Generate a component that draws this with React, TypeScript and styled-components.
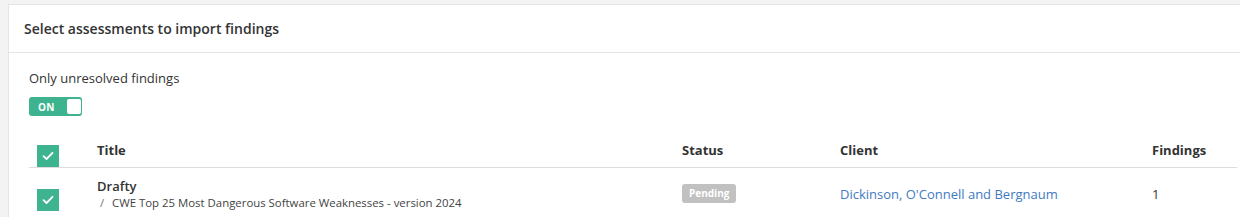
import React, { useState } from 'react'
import styled, { createGlobalStyle } from 'styled-components'

const GlobalStyle = createGlobalStyle`
  html, body {
    margin: 0;
    padding: 0;
    background: #f3f3f3;
    font-family: "Open Sans", "Noto Sans", Arial, sans-serif;
    color: #333;
  }
`

type Assessment = {
    id: number
    title: string
    template: string
    status: string
    client: string
    findings: number
}

const assessments: Assessment[] = [
    {
        id: 1,
        title: 'Drafty',
        template: 'CWE Top 25 Most Dangerous Software Weaknesses - version 2024',
        status: 'Pending',
        client: "Dickinson, O'Connell and Bergnaum",
        findings: 1,
    },
]

const CheckIcon = () => (
    <svg width="12" height="10" viewBox="0 0 12 10">
        <path d="M1.5 5.2 L4.5 8 L10.5 1.8" fill="none" stroke="#fff" strokeWidth="1.8" strokeLinecap="round" strokeLinejoin="round" />
    </svg>
)

const App = () => {
    const [onlyUnresolved, setOnlyUnresolved] = useState(true)
    const [selected, setSelected] = useState<number[]>([1])
    const allSelected = selected.length === assessments.length

    const toggleRow = (id: number) => {
        setSelected(selected.includes(id) ? selected.filter(s => s !== id) : [...selected, id])
    }

    return (
        <>
            <GlobalStyle />
            <Card>
                <CardHeader>
                    <H3>Select assessments to import findings</H3>
                </CardHeader>
                <CardBody>
                    <Label>Only unresolved findings</Label>
                    <Toggle $on={onlyUnresolved} onClick={() => setOnlyUnresolved(!onlyUnresolved)}>
                        <ToggleText>{onlyUnresolved ? 'ON' : 'OFF'}</ToggleText>
                        <Knob $on={onlyUnresolved} />
                    </Toggle>
                    <Table>
                        <HeadRow>
                            <CheckCell $head>
                                <Checkbox $checked={allSelected} onClick={() => setSelected(allSelected ? [] : assessments.map(a => a.id))}>
                                    {allSelected && <CheckIcon />}
                                </Checkbox>
                            </CheckCell>
                            <Th>Title</Th>
                            <Th>Status</Th>
                            <Th>Client</Th>
                            <Th>Findings</Th>
                        </HeadRow>
                        {assessments.map(item => (
                            <Row key={item.id}>
                                <CheckCell>
                                    <Checkbox $checked={selected.includes(item.id)} onClick={() => toggleRow(item.id)}>
                                        {selected.includes(item.id) && <CheckIcon />}
                                    </Checkbox>
                                </CheckCell>
                                <TitleCell>
                                    <Name>{item.title}</Name>
                                    <Sub><Slash>/</Slash>{item.template}</Sub>
                                </TitleCell>
                                <Td>
                                    <Badge>{item.status}</Badge>
                                </Td>
                                <Td>
                                    <ClientLink href="#">{item.client}</ClientLink>
                                </Td>
                                <Td>
                                    <Count>{item.findings}</Count>
                                </Td>
                            </Row>
                        ))}
                    </Table>
                </CardBody>
            </Card>
        </>
    )
}

const Card = styled.div`
  margin: 4px 0 0 8px;
  background: #fff;
  border-top: 1px solid #e3e5e8;
  border-left: 1px solid #e3e5e8;
  height: 213px;
  overflow: hidden;
`
const CardHeader = styled.div`
  height: 47px;
  display: flex;
  align-items: center;
  padding-left: 15px;
  border-bottom: 1px solid #e3e5e8;
`
const H3 = styled.h3`
  margin: 0;
  font-size: 14px;
  font-weight: 600;
  color: #333;
`
const CardBody = styled.div`
  padding: 16px 3px 0 20px;
`
const Label = styled.div`
  font-size: 13px;
  line-height: 18px;
  color: #333;
`
const Toggle = styled.div<{ $on: boolean }>`
  margin-top: 10px;
  width: 53px;
  height: 19px;
  box-sizing: border-box;
  border-radius: 3px;
  background: ${p => (p.$on ? '#3db38f' : '#ccc')};
  display: flex;
  align-items: center;
  position: relative;
  cursor: pointer;
`
const ToggleText = styled.span`
  color: #fff;
  font-size: 10px;
  font-weight: 700;
  padding-left: 9px;
  letter-spacing: 0.3px;
`
const Knob = styled.span<{ $on: boolean }>`
  position: absolute;
  top: 2px;
  left: ${p => (p.$on ? '38px' : '2px')};
  width: 14px;
  height: 15px;
  background: #fff;
  border-radius: 2px;
`
const Table = styled.div`
  margin-top: 18px;
  display: grid;
  grid-template-columns: 68px 585px 158px 312px 85px;
`
const HeadRow = styled.div`
  display: contents;
`
const Row = styled.div`
  display: contents;
`
const CheckCell = styled.div<{ $head?: boolean }>`
  padding: ${p => (p.$head ? '11px 0 0 8px' : '21px 0 7px 8px')};
  border-bottom: ${p => (p.$head ? '1px solid #ddd' : 'none')};
`
const Checkbox = styled.div<{ $checked: boolean }>`
  width: 22px;
  height: 22px;
  background: ${p => (p.$checked ? '#3db38f' : '#fff')};
  border: ${p => (p.$checked ? 'none' : '1px solid #bbb')};
  box-sizing: border-box;
  display: flex;
  align-items: center;
  justify-content: center;
  cursor: pointer;
`
const Th = styled.div`
  font-size: 13px;
  font-weight: 700;
  line-height: 18px;
  padding-top: 7px;
  color: #333;
  border-bottom: 1px solid #ddd;
`
const TitleCell = styled.div`
  padding-top: 9px;
`
const Name = styled.div`
  font-size: 13px;
  font-weight: 600;
  line-height: 18px;
  color: #333;
`
const Sub = styled.div`
  font-size: 11.4px;
  line-height: 16px;
  color: #444;
  margin-top: 0;
`
const Slash = styled.span`
  display: inline-block;
  width: 15px;
  padding-left: 3px;
  box-sizing: border-box;
  color: #777;
`
const Td = styled.div`
  padding-top: 17px;
  font-size: 13px;
  line-height: 18px;
  color: #333;
`
const Count = styled.span`
  color: #333;
`
const Badge = styled.span`
  display: inline-block;
  background: #c1c1c1;
  color: #fff;
  font-size: 10px;
  font-weight: 700;
  line-height: 19px;
  padding: 0 7px;
  border-radius: 3px;
  margin-top: -1px;
  vertical-align: top;
`
const ClientLink = styled.a`
  color: #3f7ac2;
  text-decoration: none;
`

export default App
